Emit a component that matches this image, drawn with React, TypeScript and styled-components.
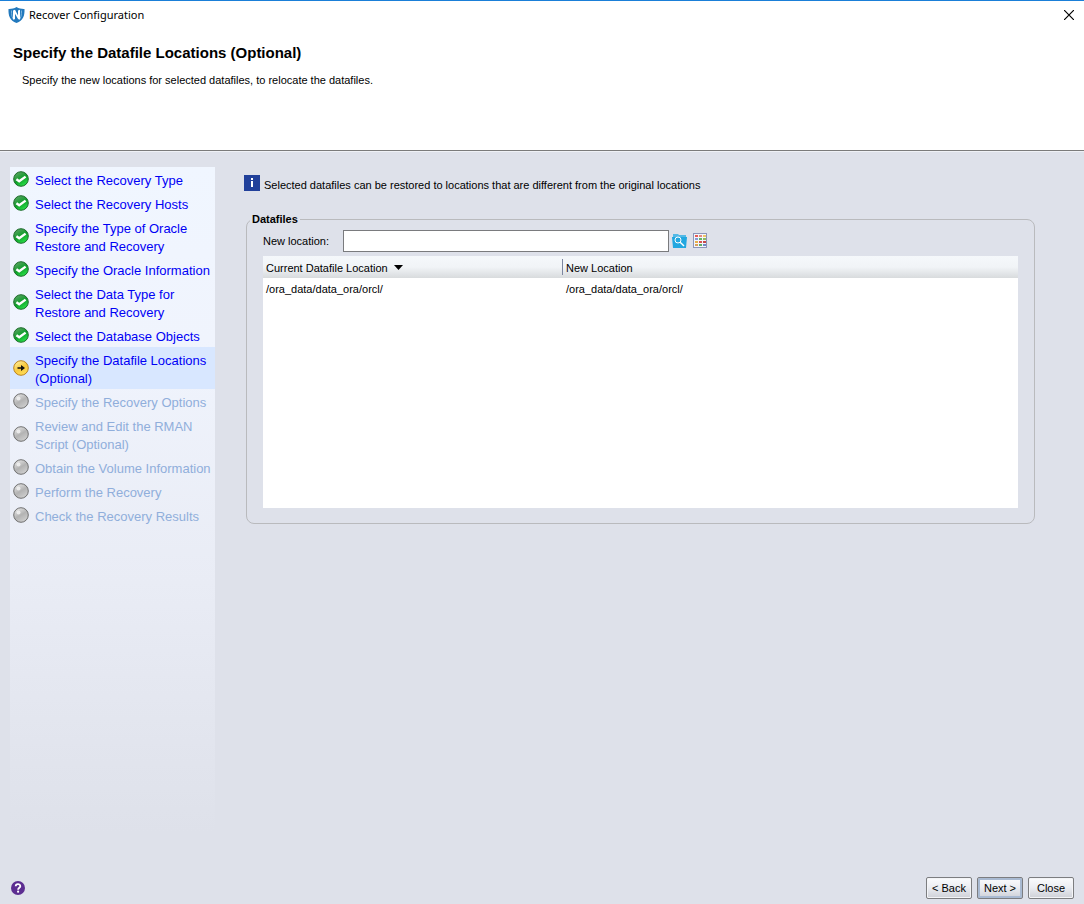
import React, { useState } from "react";
import styled, { createGlobalStyle } from "styled-components";

const GlobalStyle = createGlobalStyle`
  *, *::before, *::after { box-sizing: border-box; }
  body {
    margin: 0;
    background: #dee1ea;
    color: #000;
    font: 11px/14px "Liberation Sans", Arial, sans-serif;
  }
  button, input { font: inherit; color: inherit; }
`;

const Page = styled.div`
  display: flex;
  flex-direction: column;
  min-height: 100vh;
`;

const Banner = styled.header`
  background: #fff;
  border-top: 1px solid #1a7fd8;
  border-bottom: 1px solid #7b7b7b;
  min-height: 151px;
`;

const TitleBar = styled.div`
  display: flex;
  align-items: center;
  gap: 4px;
  height: 28px;
  padding: 0 10px 0 8px;
  font: 11px/16px "Noto Sans", "Open Sans", sans-serif;
`;

const IconButton = styled.button<{ $end?: boolean }>`
  display: flex;
  padding: 0;
  border: 0;
  background: none;
  margin-left: ${(p) => (p.$end ? "auto" : "0")};
`;

const Heading = styled.h1`
  margin: 15px 0 0 13px;
  font-size: 15px;
  line-height: 18px;
`;

const Intro = styled.p`
  margin: 11px 0 0 22px;
`;

const Main = styled.main`
  display: flex;
  flex: 1;
  align-items: stretch;
  gap: 29px;
  padding: 15px 49px 0 10px;
  border-top: 1px solid #eff1f6;
`;

const Steps = styled.nav`
  flex: none;
  width: 205px;
  background: linear-gradient(#f0f6ff, #f0f4fd 25%, #e9ecf5 60%, #dee1ea 96%);
`;

const StepList = styled.ol`
  list-style: none;
  margin: 0;
  padding: 0;
`;

type Status = "done" | "current" | "todo";

const Step = styled.li<{ $status: Status }>`
  display: flex;
  align-items: center;
  gap: 6px;
  padding: 0 0 0 3px;
  background: ${(p) => (p.$status === "current" ? "#d8e7ff" : "transparent")};
  color: ${(p) => (p.$status === "todo" ? "#90aedb" : "#0000f5")};
  font-size: 13px;
  line-height: 18px;
  svg { flex: none; }
`;

const StepText = styled.span`
  padding: 5px 0 1px;
  white-space: pre-line;
`;

const StepLink = styled.a`
  color: inherit;
  text-decoration: none;
`;

const Content = styled.section`
  flex: 1;
  min-width: 0;
  padding-top: 8px;
`;

const Notice = styled.p`
  display: flex;
  align-items: flex-end;
  gap: 4px;
  height: 17px;
  margin: 0;
  svg { align-self: flex-start; }
`;

const Group = styled.fieldset`
  min-width: 0;
  margin: 20px 0 0 2px;
  padding: 4px 16px 15px;
  border: 1px solid #b9babd;
  border-radius: 8px;
`;

const Legend = styled.legend`
  margin-left: -13px;
  padding: 0 2px;
  font-weight: bold;
`;

const Field = styled.div`
  display: flex;
  align-items: center;
  gap: 3px;
`;

const Label = styled.label`
  width: 77px;
`;

const TextBox = styled.input`
  width: 326px;
  height: 22px;
  padding: 0 4px;
  border: 1px solid #7a7b7e;
  background: #fff;
`;

const Tools = styled.div`
  display: flex;
  gap: 6px;
`;

const TableBox = styled.div`
  min-height: 252px;
  margin-top: 4px;
  background: #fff;
`;

const Table = styled.table`
  width: 100%;
  border-collapse: collapse;
  table-layout: fixed;
`;

const HeadRow = styled.tr`
  background: linear-gradient(#f5f8fb, #f1f4f7 50%, #d8dbdd);
`;

const HeadCell = styled.th<{ $divided?: boolean }>`
  width: ${(p) => (p.$divided ? "auto" : "299px")};
  height: 22px;
  padding: 2px 4px 0;
  padding-left: ${(p) => (p.$divided ? "4px" : "3px")};
  text-align: left;
  font-weight: normal;
  background: ${(p) =>
    p.$divided ? "linear-gradient(#7c86a0, #7c86a0) 0 3px / 1px 16px no-repeat" : "none"};
`;

const SortButton = styled.button`
  display: flex;
  align-items: center;
  gap: 6px;
  padding: 0;
  border: 0;
  background: none;
`;

const Cell = styled.td`
  height: 22px;
  padding: 0 4px;
  &:first-child { padding-left: 3px; }
`;

const Footer = styled.footer`
  display: flex;
  align-items: flex-start;
  justify-content: space-between;
  height: 44px;
  padding: 17px 10px 0 11px;
`;

const HelpSlot = styled.div`
  padding-top: 4px;
`;

const Actions = styled.div`
  display: flex;
  gap: 5px;
`;

const ActionButton = styled.button<{ $primary?: boolean }>`
  width: 46px;
  height: 22px;
  padding: 0;
  border: 1px solid #7c7d80;
  border-radius: 2px;
  background: linear-gradient(#fbfbfd, #eceef3 45%, #ced0d7);
  box-shadow: ${(p) => (p.$primary ? "inset 0 0 0 2px #a9bad2" : "inset 0 0 0 1px #f3f4f7")};
`;

const Shield = () => (
  <svg width="17" height="16" viewBox="0 0 17 16" aria-hidden="true">
    <path
      d="M8.500 0C6 1.600 3.200 2 .500 1.900C.200 8.300 1.800 13.700 8.500 16C15.200 13.700 16.800 8.300 16.500 1.900C13.800 2 11 1.600 8.500 0Z"
      fill="#2279bd"
    />
    <path d="M3.500 3.500C3.500 8 4 11 6 13M13.500 3.500C13.500 8 13 11 11 13" stroke="#80b6df" fill="none" />
    <path d="M5 3.500L7 2.800L10 8.500V3.500L12 2.800V12.300H10.200L7 6.800V12.300H5Z" fill="#fff" />
  </svg>
);

const CloseMark = () => (
  <svg width="10" height="10" viewBox="0 0 10 10" aria-hidden="true">
    <path d="M0 0L10 10M10 0L0 10" stroke="#000" strokeWidth="1.200" />
  </svg>
);

const ballColors = {
  done: ["#5fa568", "#0f9c2a", "#2cec4c", "#1c6b2a"],
  current: ["#fff0a0", "#f8c93c", "#ffdf5e", "#bb831f"],
  todo: ["#e8e8e8", "#b3b3b3", "#d2d2d2", "#707070"],
};

const StepIcon = ({ status }: { status: Status }) => {
  const [light, mid, low, edge] = ballColors[status];
  const id = `ball-${status}`;
  return (
    <svg width="16" height="16" viewBox="0 0 16 16" aria-hidden="true">
      <defs>
        <linearGradient id={id} x1="0.2" y1="0" x2="0.8" y2="1">
          <stop offset="0" stopColor={light} />
          <stop offset="0.5" stopColor={mid} />
          <stop offset="1" stopColor={low} />
        </linearGradient>
      </defs>
      <circle cx="8" cy="8" r="7.300" fill={`url(#${id})`} stroke={edge} />
      {status === "done" && (
        <path d="M3.400 8.200L6.200 10.300L12.600 5.600" stroke="#fff" strokeWidth="2.400" fill="none" />
      )}
      {status === "current" && (
        <path d="M4.500 7.300H8V5L12 8L8 11V8.700H4.500Z" fill="#111" />
      )}
      {status === "todo" && <circle cx="5.500" cy="5.500" r="2" fill="#f4f4f4" opacity="0.800" />}
    </svg>
  );
};

const InfoIcon = () => (
  <svg width="16" height="16" viewBox="0 0 16 16" aria-hidden="true">
    <path d="M0 0H16V16H0Z" fill="#21409a" />
    <path d="M7 3H9V5H7ZM7 6H9V12H7Z" fill="#fff" />
  </svg>
);

const BrowseIcon = () => (
  <svg width="15" height="16" viewBox="0 0 15 16" aria-hidden="true">
    <path d="M1 3V1H6L7 2H14V6H1Z" fill="#53b9e6" />
    <path d="M0 4H15L14 15H1Z" fill="#22a7e0" />
    <circle cx="6" cy="7" r="3" stroke="#fff" fill="none" />
    <path d="M8.200 9.200L12 13" stroke="#fff" strokeWidth="1.400" />
  </svg>
);

const cellColors = [
  "#e85c55", "#e28a83", "#f0c465",
  "#8a9bd4", "#63b565", "#8cbb62",
  "#e6b04b", "#d95450", "#c84848",
  "#d9a05a", "#5fae63", "#7386c6",
];

const GridIcon = () => (
  <svg width="14" height="15" viewBox="0 0 14 15" aria-hidden="true">
    <rect x="0.500" y="0.500" width="13" height="14" fill="#f3f6fb" stroke="#8d95b8" />
    {cellColors.map((fill, i) => (
      <rect key={i} x={2 + (i % 3) * 4} y={2 + Math.floor(i / 3) * 3} width="3" height="2" fill={fill} />
    ))}
  </svg>
);

const SortArrow = () => (
  <svg width="9" height="7" viewBox="0 0 9 7" aria-hidden="true">
    <path d="M0 0H9L4.500 5Z" fill="#000" />
  </svg>
);

const HelpIcon = () => (
  <svg width="14" height="14" viewBox="0 0 14 14" aria-hidden="true">
    <circle cx="7" cy="7" r="7" fill="#5c2d91" />
    <path d="M4.700 5.300C4.700 2.300 9.300 2.300 9.300 5.200C9.300 6.800 7.100 6.700 7.100 8.700" stroke="#fff" strokeWidth="1.800" fill="none" />
    <circle cx="7.100" cy="10.700" r="1.100" fill="#fff" />
  </svg>
);

const steps: { text: string; status: Status }[] = [
  { text: "Select the Recovery Type", status: "done" },
  { text: "Select the Recovery Hosts", status: "done" },
  { text: "Specify the Type of Oracle\nRestore and Recovery", status: "done" },
  { text: "Specify the Oracle Information", status: "done" },
  { text: "Select the Data Type for\nRestore and Recovery", status: "done" },
  { text: "Select the Database Objects", status: "done" },
  { text: "Specify the Datafile Locations\n(Optional)", status: "current" },
  { text: "Specify the Recovery Options", status: "todo" },
  { text: "Review and Edit the RMAN\nScript (Optional)", status: "todo" },
  { text: "Obtain the Volume Information", status: "todo" },
  { text: "Perform the Recovery", status: "todo" },
  { text: "Check the Recovery Results", status: "todo" },
];

const datafiles = [{ current: "/ora_data/data_ora/orcl/", next: "/ora_data/data_ora/orcl/" }];

export default function App() {
  const [location, setLocation] = useState("");
  return (
    <Page>
      <GlobalStyle />
      <Banner>
        <TitleBar>
          <Shield />
          <span>Recover Configuration</span>
          <IconButton $end type="button" aria-label="Close window">
            <CloseMark />
          </IconButton>
        </TitleBar>
        <Heading>Specify the Datafile Locations (Optional)</Heading>
        <Intro>Specify the new locations for selected datafiles, to relocate the datafiles.</Intro>
      </Banner>
      <Main>
        <Steps aria-label="Recovery steps">
          <StepList>
            {steps.map(({ text, status }) => (
              <Step key={text} $status={status} aria-current={status === "current" ? "step" : undefined}>
                <StepIcon status={status} />
                <StepText>{status === "todo" ? text : <StepLink href="#">{text}</StepLink>}</StepText>
              </Step>
            ))}
          </StepList>
        </Steps>
        <Content>
          <Notice>
            <InfoIcon />
            Selected datafiles can be restored to locations that are different from the original locations
          </Notice>
          <Group>
            <Legend>Datafiles</Legend>
            <Field>
              <Label htmlFor="new-location">New location:</Label>
              <TextBox
                id="new-location"
                type="text"
                value={location}
                onChange={(e) => setLocation(e.target.value)}
              />
              <Tools>
                <IconButton type="button" aria-label="Browse">
                  <BrowseIcon />
                </IconButton>
                <IconButton type="button" aria-label="Apply to table">
                  <GridIcon />
                </IconButton>
              </Tools>
            </Field>
            <TableBox>
              <Table>
                <thead>
                  <HeadRow>
                    <HeadCell scope="col" aria-sort="descending">
                      <SortButton type="button">
                        Current Datafile Location
                        <SortArrow />
                      </SortButton>
                    </HeadCell>
                    <HeadCell $divided scope="col">
                      New Location
                    </HeadCell>
                  </HeadRow>
                </thead>
                <tbody>
                  {datafiles.map((row) => (
                    <tr key={row.current}>
                      <Cell>{row.current}</Cell>
                      <Cell>{row.next}</Cell>
                    </tr>
                  ))}
                </tbody>
              </Table>
            </TableBox>
          </Group>
        </Content>
      </Main>
      <Footer>
        <HelpSlot>
          <IconButton type="button" aria-label="Help">
            <HelpIcon />
          </IconButton>
        </HelpSlot>
        <Actions>
          <ActionButton type="button">&lt; Back</ActionButton>
          <ActionButton type="button" $primary>
            Next &gt;
          </ActionButton>
          <ActionButton type="button">Close</ActionButton>
        </Actions>
      </Footer>
    </Page>
  );
}
